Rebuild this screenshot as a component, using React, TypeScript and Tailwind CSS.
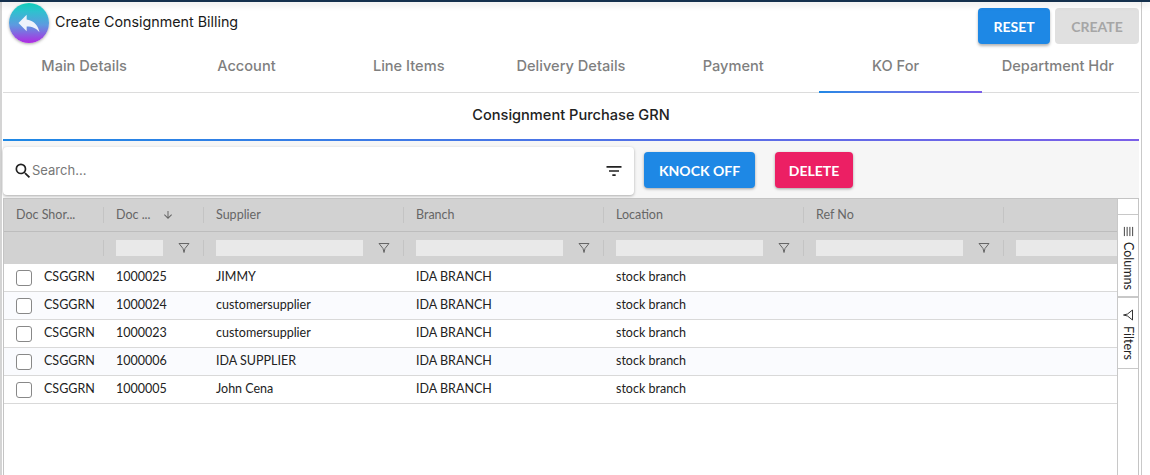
import { MdReply, MdSearch, MdFilterList, MdArrowDownward } from "react-icons/md";

const tabs = ["Main Details", "Account", "Line Items", "Delivery Details", "Payment", "KO For", "Department Hdr"];

const rows = [
  { doc: "1000025", supplier: "JIMMY" },
  { doc: "1000024", supplier: "customersupplier" },
  { doc: "1000023", supplier: "customersupplier" },
  { doc: "1000006", supplier: "IDA SUPPLIER" },
  { doc: "1000005", supplier: "John Cena" },
];

// ag-grid style funnel
function Funnel({ className }: { className?: string }) {
  return (
    <svg viewBox="0 0 12 12" className={className} fill="none" stroke="currentColor" strokeWidth="1">
      <path d="M1 1.5h10L7 6.5 6 10.5 5 6.5z" strokeLinejoin="round" />
    </svg>
  );
}

function FilterCell({ width, inputWidth, funnel = true }: { width: string; inputWidth: string; funnel?: boolean }) {
  return (
    <div className={`${width} shrink-0 h-full flex items-center pl-[13px] relative`}>
      <div className="absolute left-0 top-[8px] h-[16px] w-px bg-[#c4c4c4]" />
      <div className={`${inputWidth} h-[16px] bg-[#e9e9e9]`} />
      {funnel && <Funnel className="w-[12px] h-[12px] text-[#666] ml-[15px]" />}
    </div>
  );
}

function HeaderCell({ width, label, sorted }: { width: string; label: string; sorted?: boolean }) {
  return (
    <div className={`${width} shrink-0 h-full flex items-center pl-[13px] relative`}>
      <div className="absolute left-0 top-[8px] h-[16px] w-px bg-[#c4c4c4]" />
      <span className="text-[12.5px] text-[#666]">{label}</span>
      {sorted && <MdArrowDownward className="w-[12px] h-[12px] text-[#666] ml-[11px]" />}
    </div>
  );
}

export default function App() {
  return (
    <div className="w-[1150px] h-[475px] overflow-hidden bg-white relative font-['Inter',sans-serif]">
      {/* dark strip at the very top */}
      <div className="absolute top-0 left-0 right-0 h-[2px] bg-[#14304d] shadow-[0_2px_7px_rgba(0,0,0,0.22)] z-10" />

      <div className="w-[1142px] h-full border-r border-[#c9c9c9] border-l-2 border-l-[#d4d4d4] flex flex-col">
        {/* Title row */}
        <div className="h-[47px] shrink-0 flex items-start justify-between mr-[2px] pt-[3px]">
          <div className="flex items-start pl-[7px]">
            <button className="w-[40px] h-[40px] rounded-full bg-[linear-gradient(to_bottom,#12d9c4,#5d9ae0_55%,#b02ae2)] shadow-[0_1px_3px_rgba(0,0,0,0.35)] flex items-center justify-center">
              <MdReply className="w-[28px] h-[28px] text-[#eef2fb]" />
            </button>
            <span className="ml-[6px] mt-[10px] text-[14.3px] leading-[18px] text-[#1a1a1a]">Create Consignment Billing</span>
          </div>
          <div className="flex gap-[5px] mt-[5px] font-['Lato',sans-serif]">
            <button className="w-[72px] h-[36px] rounded bg-[#1e88e5] text-white text-[14px] font-bold shadow-[0_2px_3px_rgba(0,0,0,0.3)]">RESET</button>
            <button className="w-[84px] h-[36px] rounded bg-[#e0e0e0] text-[#a6a6a6] text-[14px] font-bold">CREATE</button>
          </div>
        </div>

        {/* Tabs */}
        <div className="h-[46px] shrink-0 flex ml-px mr-[2px] border-b border-[#dcdcdc]">
          {tabs.map((t) => (
            <div key={t} className="w-[162.4px] relative flex items-center justify-center pb-[5px] text-[14.6px] font-medium text-[#7f7f7f]">
              {t}
              {t === "KO For" && (
                <div className="absolute left-[5px] bottom-[-1px] w-[163px] h-[2px] bg-gradient-to-r from-[#1e88e5] to-[#7b5fe8]" />
              )}
            </div>
          ))}
        </div>

        {/* Section heading */}
        <div className="h-[48px] shrink-0 ml-px mr-[2px] flex items-center justify-center text-[14.6px] font-medium text-[#222] border-b-2 border-transparent [border-image:linear-gradient(to_right,#1e88e5,#7b5fe8)_1]">
          Consignment Purchase GRN
        </div>

        {/* Toolbar */}
        <div className="h-[57px] shrink-0 ml-px mr-[2px] bg-[#f6f6f6] flex items-start pt-[6px]">
          <div className="w-[631px] h-[48px] rounded bg-white shadow-[0_1px_3px_rgba(0,0,0,0.3)] flex items-center pl-[10px] pr-[10px]">
            <MdSearch className="w-[20px] h-[20px] text-[#222]" />
            <span className="ml-[-1px] text-[13px] text-[#777]">Search...</span>
            <MdFilterList className="w-[20px] h-[20px] text-[#222] ml-auto" />
          </div>
          <div className="flex gap-[20px] ml-[10px] mt-[5px] font-['Lato',sans-serif]">
            <button className="w-[111px] h-[36px] rounded bg-[#1e88e5] text-white text-[14px] font-bold shadow-[0_1px_3px_rgba(0,0,0,0.35)]">KNOCK OFF</button>
            <button className="w-[78px] h-[36px] rounded bg-[#ec1f64] text-white text-[14px] font-bold shadow-[0_1px_3px_rgba(0,0,0,0.35)]">DELETE</button>
          </div>
        </div>

        {/* Grid */}
        <div className="flex-1 min-h-0 ml-px mr-[2px] flex border border-b-0 border-[#c4c4c4] font-['Lato',sans-serif]">
          <div className="flex-1 min-w-0 overflow-hidden">
            <div className="h-[33px] bg-[#d2d2d2] border-b border-[#bdbdbd] flex">
              <div className="w-[99px] shrink-0 h-full flex items-center pl-[12px] text-[12.5px] text-[#666]">Doc Shor...</div>
              <HeaderCell width="w-[100px]" label="Doc ..." sorted />
              <HeaderCell width="w-[200px]" label="Supplier" />
              <HeaderCell width="w-[200px]" label="Branch" />
              <HeaderCell width="w-[200px]" label="Location" />
              <HeaderCell width="w-[200px]" label="Ref No" />
              <HeaderCell width="w-[200px]" label="" />
            </div>
            <div className="h-[32px] bg-[#d2d2d2] flex">
              <div className="w-[99px] shrink-0" />
              <FilterCell width="w-[100px]" inputWidth="w-[47px]" />
              <FilterCell width="w-[200px]" inputWidth="w-[147px]" />
              <FilterCell width="w-[200px]" inputWidth="w-[147px]" />
              <FilterCell width="w-[200px]" inputWidth="w-[147px]" />
              <FilterCell width="w-[200px]" inputWidth="w-[147px]" />
              <FilterCell width="w-[200px]" inputWidth="w-[147px]" funnel={false} />
            </div>
            {rows.map((r, i) => (
              <div key={r.doc} className={`h-[28px] flex items-center border-b border-[#d9d9d9] text-[12.5px] text-[#222] ${i % 2 === 1 ? "bg-[#fafbfe]" : "bg-white"}`}>
                <div className="w-[99px] shrink-0 flex items-center pl-[12px]">
                  <span className="w-[16px] h-[16px] rounded-[3px] border border-[#888] bg-white" />
                  <span className="ml-[12px]">CSGGRN</span>
                </div>
                <div className="w-[100px] shrink-0 pl-[13px]">{r.doc}</div>
                <div className="w-[200px] shrink-0 pl-[13px]">{r.supplier}</div>
                <div className="w-[200px] shrink-0 pl-[13px]">IDA BRANCH</div>
                <div className="w-[200px] shrink-0 pl-[13px]">stock branch</div>
              </div>
            ))}
          </div>

          {/* Side bar */}
          <div className="w-[21px] shrink-0 flex flex-col border-l border-[#c8c8c8] text-[12.5px] text-[#222]">
            <div className="h-[16px] border-b border-[#c8c8c8]" />
            <div className="h-[83px] border-b-2 border-[#c8c8c8] flex flex-col items-center pt-[11px]">
              <svg viewBox="0 0 12 12" className="w-[11px] h-[11px] mb-[5px]" stroke="#333" strokeWidth="1">
                <path d="M1.5 1v10M4.5 1v10M7.5 1v10M10.5 1v10" />
              </svg>
              <span className="[writing-mode:vertical-rl] leading-[20px]">Columns</span>
            </div>
            <div className="h-[71px] border-b border-[#c8c8c8] flex flex-col items-center pt-[11px]">
              <Funnel className="w-[12px] h-[12px] text-[#333] rotate-90 mb-[5px]" />
              <span className="[writing-mode:vertical-rl] leading-[20px]">Filters</span>
            </div>
          </div>
        </div>
      </div>
    </div>
  );
}
